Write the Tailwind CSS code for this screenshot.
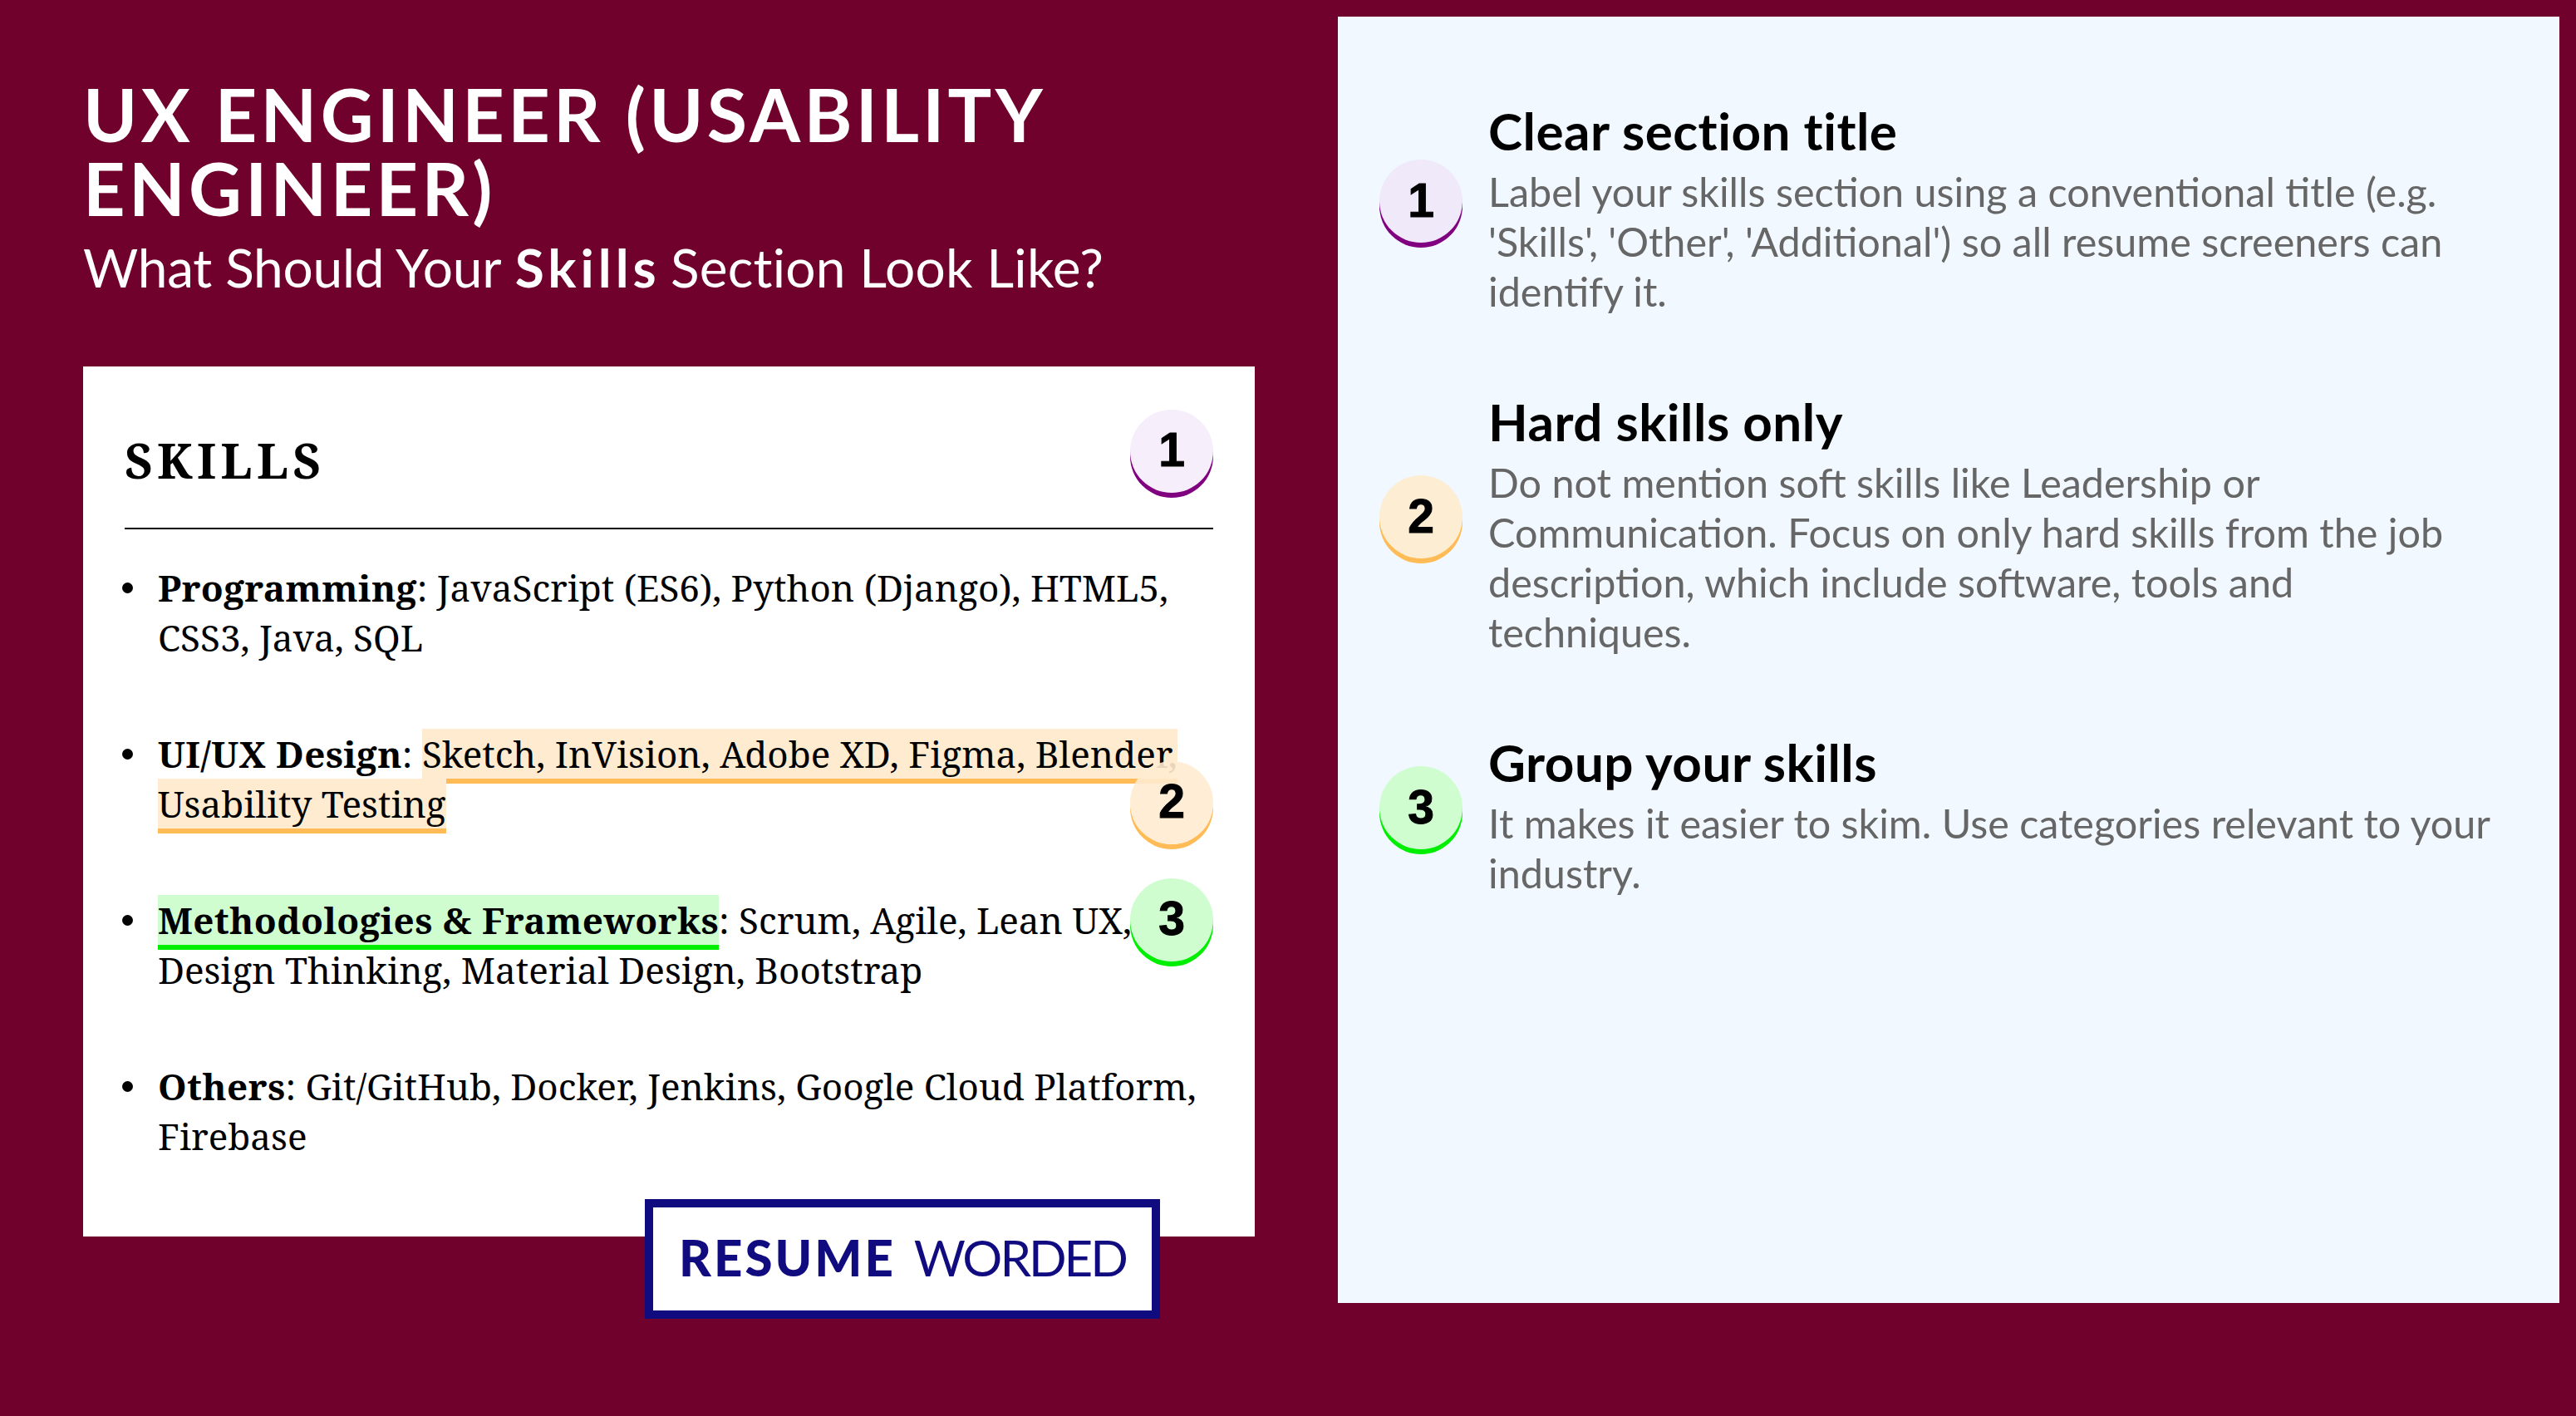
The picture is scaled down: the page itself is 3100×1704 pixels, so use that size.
<!DOCTYPE html>
<html>
<head>
<meta charset="utf-8">
<script src="https://cdn.jsdelivr.net/npm/@tailwindcss/browser@4"></script>
</head>
<body class="m-0">
<div class="flex w-[3100px] h-[1704px] bg-[#70002c] font-['Lato','Noto_Sans',sans-serif] overflow-hidden">
  <section class="w-[1610px] shrink-0 pl-[100px] pt-[93px]">
    <h1 class="text-[88px] leading-[89px] font-bold tracking-[4.3px] text-white w-[1300px]">UX ENGINEER (USABILITY ENGINEER)</h1>
    <p class="mt-[16px] text-[64px] leading-[70px] text-white"><span class="tracking-[-0.25px]">What Should Your</span> <strong class="font-bold tracking-[5px] -mr-[4px]">Skills</strong> <span class="tracking-[0.2px]">Section Look Like?</span></p>
    <div class="relative mt-[84px] w-[1410px] h-[1047px] bg-white px-[50px] font-['Noto_Serif','DejaVu_Serif',serif] text-black">
      <h2 class="pt-[73px] pb-[41px] text-[58px] leading-[80px] font-bold tracking-[5.4px] border-b-2 border-black">SKILLS</h2>
      <ul class="pl-[40px] pt-[40px] text-[44px] leading-[60px]">
        <li class="relative mb-[80px] before:content-[''] before:absolute before:left-[-43px] before:top-[24px] before:w-[13px] before:h-[13px] before:rounded-full before:bg-black"><b class="tracking-[0.38px]">Programming</b>: JavaScript (ES6), Python (Django), HTML5, CSS3, Java, SQL</li>
        <li class="relative mb-[80px] before:content-[''] before:absolute before:left-[-43px] before:top-[24px] before:w-[13px] before:h-[13px] before:rounded-full before:bg-black"><b class="tracking-[0.38px]">UI/UX Design</b>: <span class="bg-[#ffecd0] border-b-[6px] border-[#ffbb55]">Sketch, InVision, Adobe XD, Figma, Blender, Usability Testing</span></li>
        <li class="relative mb-[80px] before:content-[''] before:absolute before:left-[-43px] before:top-[24px] before:w-[13px] before:h-[13px] before:rounded-full before:bg-black"><span class="bg-[#d0fdd0] border-b-[6px] border-[#00ee00] font-bold tracking-[0.38px]">Methodologies &amp; Frameworks</span>: Scrum, Agile, Lean UX, Design Thinking, Material Design, Bootstrap</li>
        <li class="relative before:content-[''] before:absolute before:left-[-43px] before:top-[24px] before:w-[13px] before:h-[13px] before:rounded-full before:bg-black"><b class="tracking-[0.38px]">Others</b>: Git/GitHub, Docker, Jenkins, Google Cloud Platform, Firebase</li>
      </ul>
      <div class="absolute right-[50px] top-[52px] w-[100px] h-[100px] pb-[4px] rounded-full bg-[#f6eefa] shadow-[0_6px_0_#800080] flex items-center justify-center font-['Liberation_Sans',sans-serif] font-bold text-[57px] leading-none [-webkit-text-stroke:1px_black]">1</div>
      <div class="absolute right-[50px] top-[475px] w-[100px] h-[100px] pb-[4px] rounded-full bg-[#ffecd0]/90 shadow-[0_6px_0_#ffbb55] flex items-center justify-center font-['Liberation_Sans',sans-serif] font-bold text-[57px] leading-none [-webkit-text-stroke:1px_black]">2</div>
      <div class="absolute right-[50px] top-[616px] w-[100px] h-[100px] pb-[4px] rounded-full bg-[#d0fdd0] shadow-[0_6px_0_#00ee00] flex items-center justify-center font-['Liberation_Sans',sans-serif] font-bold text-[57px] leading-none [-webkit-text-stroke:1px_black]">3</div>
      <div class="absolute left-[676px] top-[1002px] w-[620px] h-[144px] pb-[4px] border-[10px] border-[#100c80] bg-white flex items-center justify-center gap-[22px] text-[#100c80] font-['Lato',sans-serif] text-[60px] leading-none">
        <span class="font-black tracking-[3px]">RESUME</span><span class="tracking-[-3px]">WORDED</span>
      </div>
    </div>
  </section>
  <aside class="mt-[20px] w-[1470px] h-[1548px] bg-[#f1f8ff] pl-[50px] pr-[75px] pt-[102px]">
    <div class="flex items-center gap-[31px] mb-[92px]">
      <div class="mb-[19px] w-[100px] h-[100px] shrink-0 rounded-full bg-[#f0e9fa] shadow-[0_6px_0_#800080] flex items-center justify-center font-['Liberation_Sans',sans-serif] font-bold text-[57px] leading-none text-black [-webkit-text-stroke:1px_black]">1</div>
      <div>
        <h3 class="text-[62px] leading-[70px] font-bold tracking-[0.5px] text-black mb-[8px]">Clear section title</h3>
        <p class="text-[48.5px] leading-[60px] text-[#666666]">Label your skills section using a conventional title (e.g. 'Skills', 'Other', 'Additional') so all resume screeners can identify it.</p>
      </div>
    </div>
    <div class="flex items-center gap-[31px] mb-[92px]">
      <div class="mb-[19px] w-[100px] h-[100px] shrink-0 rounded-full bg-[#fdeed3] shadow-[0_6px_0_#ffbb55] flex items-center justify-center font-['Liberation_Sans',sans-serif] font-bold text-[57px] leading-none text-black [-webkit-text-stroke:1px_black]">2</div>
      <div>
        <h3 class="text-[62px] leading-[70px] font-bold tracking-[0.5px] text-black mb-[8px]">Hard skills only</h3>
        <p class="text-[48.5px] leading-[60px] text-[#666666]">Do not mention soft skills like Leadership or Communication. Focus on only hard skills from the job description, which include software, tools and techniques.</p>
      </div>
    </div>
    <div class="flex items-center gap-[31px]">
      <div class="mb-[19px] w-[100px] h-[100px] shrink-0 rounded-full bg-[#d0fdd0] shadow-[0_6px_0_#00ee00] flex items-center justify-center font-['Liberation_Sans',sans-serif] font-bold text-[57px] leading-none text-black [-webkit-text-stroke:1px_black]">3</div>
      <div>
        <h3 class="text-[62px] leading-[70px] font-bold tracking-[0.5px] text-black mb-[8px]">Group your skills</h3>
        <p class="text-[48.5px] leading-[60px] text-[#666666]">It makes it easier to skim. Use categories relevant to your industry.</p>
      </div>
    </div>
  </aside>
</div>
</body>
</html>
